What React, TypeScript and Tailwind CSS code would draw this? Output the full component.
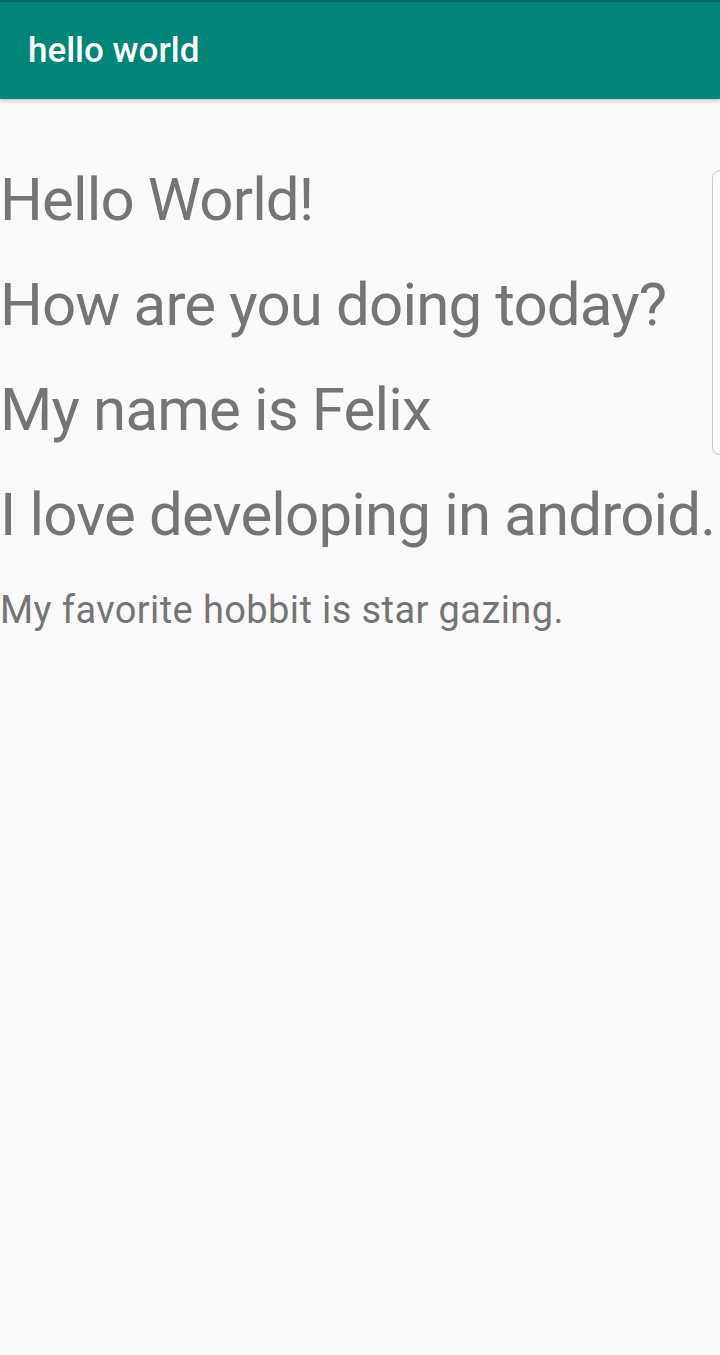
export default function App() {
  const lines = ['Hello World!', 'How are you doing today?', 'My name is Felix', 'I love developing in android.'];

  return (
    <div className="relative min-h-[1355px] w-full overflow-hidden bg-[#fafafa] font-['Roboto',sans-serif]">
      <header className="h-[99px] w-full border-t-2 border-[#00695f] bg-[#008577] shadow-[0_2px_4px_rgba(0,0,0,0.2)] flex items-center px-[28px]">
        <h1 className="text-[35px] font-medium text-white leading-none">hello world</h1>
      </header>

      <main className="pt-[48px] text-[#757575]">
        {lines.map((line) => (
          <p key={line} className="text-[60px] leading-[105px] tracking-[-0.85px] whitespace-nowrap">
            {line}
          </p>
        ))}
        <p className="mt-[15px] text-[38px] tracking-[0.4px] whitespace-nowrap">My favorite hobbit is star gazing.</p>
      </main>

      <div className="absolute right-[-8px] top-[170px] h-[285px] w-[16px] rounded-[8px] border border-[#c8c8c8]" />
    </div>
  );
}
